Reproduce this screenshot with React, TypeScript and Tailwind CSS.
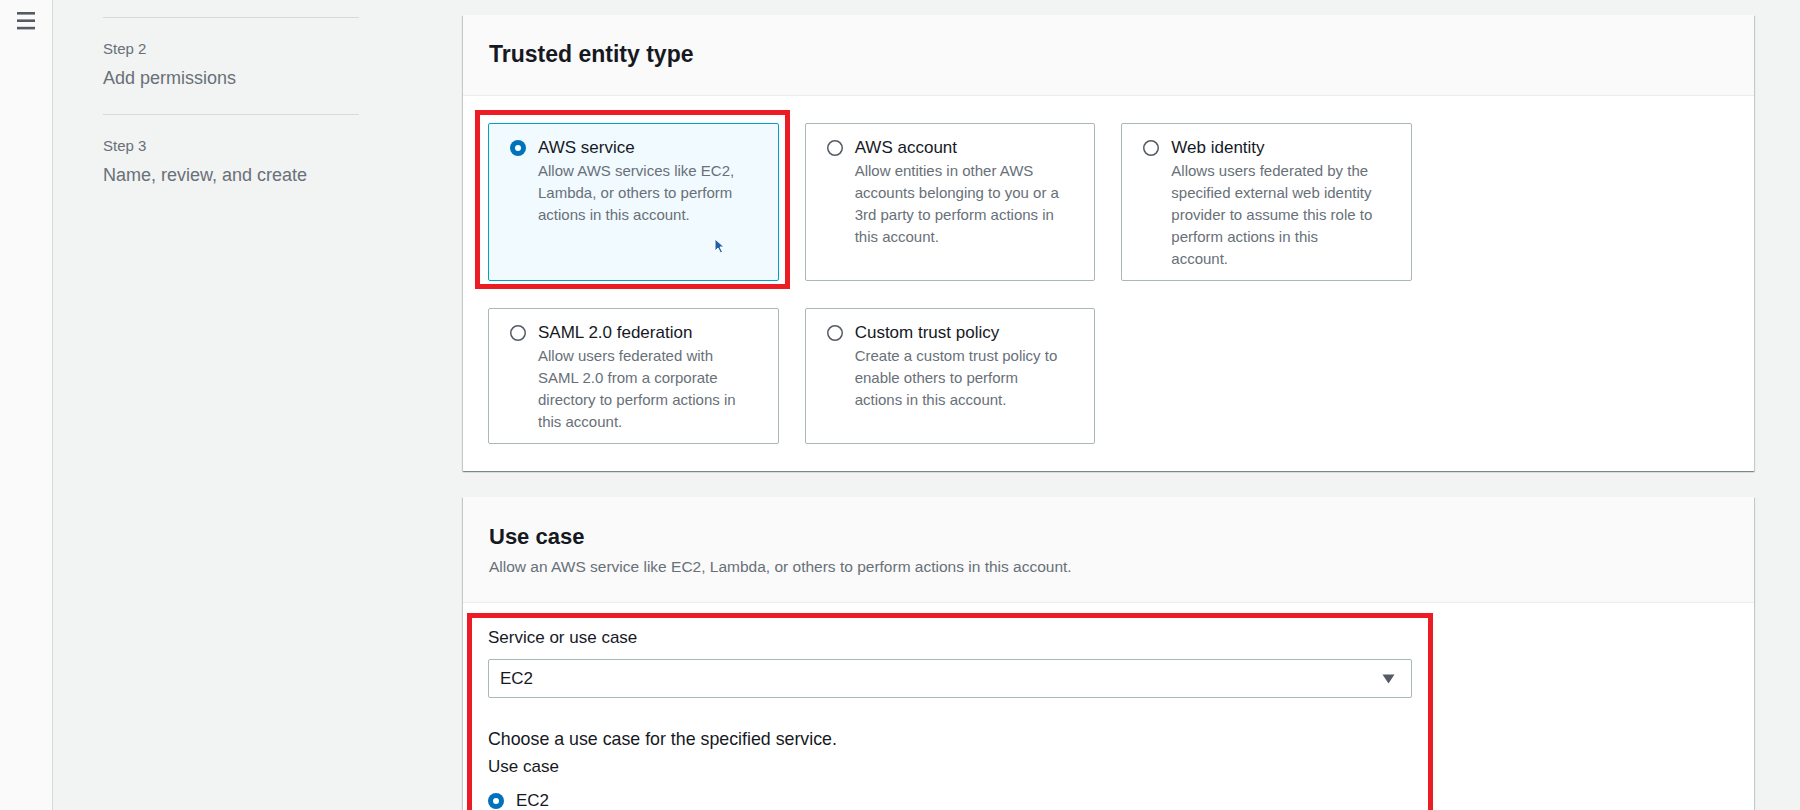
import React from 'react';

const steps = [
  { step: 'Step 2', name: 'Add permissions' },
  { step: 'Step 3', name: 'Name, review, and create' },
];

const entityTypes = [
  {
    title: 'AWS service',
    lines: ['Allow AWS services like EC2,', 'Lambda, or others to perform', 'actions in this account.'],
    selected: true,
  },
  {
    title: 'AWS account',
    lines: ['Allow entities in other AWS', 'accounts belonging to you or a', '3rd party to perform actions in', 'this account.'],
  },
  {
    title: 'Web identity',
    lines: [
      'Allows users federated by the',
      'specified external web identity',
      'provider to assume this role to',
      'perform actions in this',
      'account.',
    ],
  },
  {
    title: 'SAML 2.0 federation',
    lines: ['Allow users federated with', 'SAML 2.0 from a corporate', 'directory to perform actions in', 'this account.'],
  },
  {
    title: 'Custom trust policy',
    lines: ['Create a custom trust policy to', 'enable others to perform', 'actions in this account.'],
  },
];

const panelShadow =
  'shadow-[0_1px_1px_0_rgba(0,28,36,0.3),1px_1px_1px_0_rgba(0,28,36,0.15),-1px_1px_1px_0_rgba(0,28,36,0.15)]';

function Radio({ checked }: { checked?: boolean }) {
  return (
    <svg width="16" height="16" viewBox="0 0 16 16" className="shrink-0">
      {checked ? (
        <>
          <circle cx="8" cy="8" r="8" fill="#0073bb" />
          <circle cx="8" cy="8" r="3" fill="#ffffff" />
        </>
      ) : (
        <circle cx="8" cy="8" r="7.25" fill="#ffffff" stroke="#545b64" strokeWidth="1.5" />
      )}
    </svg>
  );
}

function EntityCard({ title, lines, selected }: { title: string; lines: string[]; selected?: boolean }) {
  const card = (
    <div
      className={`flex h-full gap-[12px] rounded-[2px] border pl-[21px] pr-[8px] pt-[12px] pb-[10px] ${
        selected ? 'border-[#00a1c9] bg-[#f1faff]' : 'border-[#aab7b8] bg-white'
      }`}
    >
      <div className="pt-[4px]">
        <Radio checked={selected} />
      </div>
      <div>
        <div className="text-[17px] leading-[24px] text-[#16191f]">{title}</div>
        {lines.map((l) => (
          <div key={l} className="text-[15px] leading-[22px] text-[#687078] whitespace-nowrap">
            {l}
          </div>
        ))}
      </div>
    </div>
  );

  if (!selected) return card;

  return (
    <div className="relative h-full">
      {card}
      {/* annotation frame */}
      <div className="pointer-events-none absolute -left-[13px] -top-[13px] -right-[11px] -bottom-[8px] border-[5px] border-[#ec1c24]" />
      {/* mouse pointer */}
      <svg className="absolute left-[226px] top-[115px]" width="11" height="16" viewBox="0 0 11 16">
        <path d="M1 1 L1 13 L4 10 L6.5 15 L8.5 14 L6 9 L10 9 Z" fill="#1f5fa8" stroke="#ffffff" strokeWidth="1" />
      </svg>
    </div>
  );
}

export default function App() {
  return (
    <div className="flex h-[810px] overflow-hidden bg-[#f2f3f3] font-['Liberation_Sans',Arial,sans-serif]">
      <aside className="flex w-[53px] shrink-0 justify-center border-r border-[#d5dbdb] bg-[#fafafa] pt-[11px]">
        <svg width="20" height="19" viewBox="0 0 20 19">
          <rect x="1" y="1" width="18" height="2.6" fill="#545b64" />
          <rect x="1" y="8.4" width="18" height="2.6" fill="#545b64" />
          <rect x="1" y="15.8" width="18" height="2.6" fill="#545b64" />
        </svg>
      </aside>

      <nav className="w-[306px] shrink-0 pl-[50px] pt-[17px]">
        {steps.map((s) => (
          <div key={s.step} className="border-t border-[#d5dbdb] pt-[20px] pb-[23px]">
            <div className="text-[15px] leading-[22px] text-[#687078]">{s.step}</div>
            <div className="mt-[5px] text-[18px] leading-[26px] text-[#687078]">{s.name}</div>
          </div>
        ))}
      </nav>

      <main className="flex min-w-0 flex-1 flex-col gap-[26px] pl-[104px] pr-[46px] pt-[15px]">
        <section className={`bg-white ${panelShadow}`}>
          <header className="border-b border-[#eaeded] bg-[#fafafa] px-[26px] pt-[24px] pb-[26px]">
            <h2 className="text-[23px] font-bold leading-[30px] text-[#16191f]">Trusted entity type</h2>
          </header>
          <div className="px-[25px] pt-[27px] pb-[27px]">
            <div className="grid w-[924px] grid-cols-3 gap-x-[26px] gap-y-[27px]">
              {entityTypes.map((e) => (
                <EntityCard key={e.title} {...e} />
              ))}
            </div>
          </div>
        </section>

        <section className={`bg-white ${panelShadow}`}>
          <header className="border-b border-[#eaeded] bg-[#fafafa] px-[26px] pt-[25px] pb-[24px]">
            <h2 className="text-[22px] font-bold leading-[30px] text-[#16191f]">Use case</h2>
            <p className="mt-[4px] text-[15.5px] leading-[22px] text-[#687078]">
              Allow an AWS service like EC2, Lambda, or others to perform actions in this account.
            </p>
          </header>
          <div className="relative px-[25px] pt-[23px] pb-[30px]">
            <div className="pointer-events-none absolute left-[4px] top-[10px] h-[260px] w-[966px] border-[5px] border-[#ec1c24]" />
            <div className="w-[924px]">
              <div className="text-[17px] leading-[24px] text-[#16191f]">Service or use case</div>
              <div className="mt-[9px] flex h-[39px] items-center justify-between rounded-[2px] border border-[#aab7b8] bg-white pl-[11px] pr-[16px]">
                <span className="text-[17px] text-[#16191f]">EC2</span>
                <svg width="13" height="10" viewBox="0 0 13 10">
                  <path d="M0.5 0.5 L12.5 0.5 L6.5 9.5 Z" fill="#545b64" />
                </svg>
              </div>
              <div className="mt-[29px] text-[17.8px] leading-[24px] text-[#16191f]">
                Choose a use case for the specified service.
              </div>
              <div className="mt-[4px] text-[17px] leading-[24px] text-[#16191f]">Use case</div>
              <div className="mt-[10px] flex items-center gap-[12px] leading-[24px]">
                <Radio checked />
                <span className="text-[17px] text-[#16191f]">EC2</span>
              </div>
            </div>
          </div>
        </section>
      </main>
    </div>
  );
}
